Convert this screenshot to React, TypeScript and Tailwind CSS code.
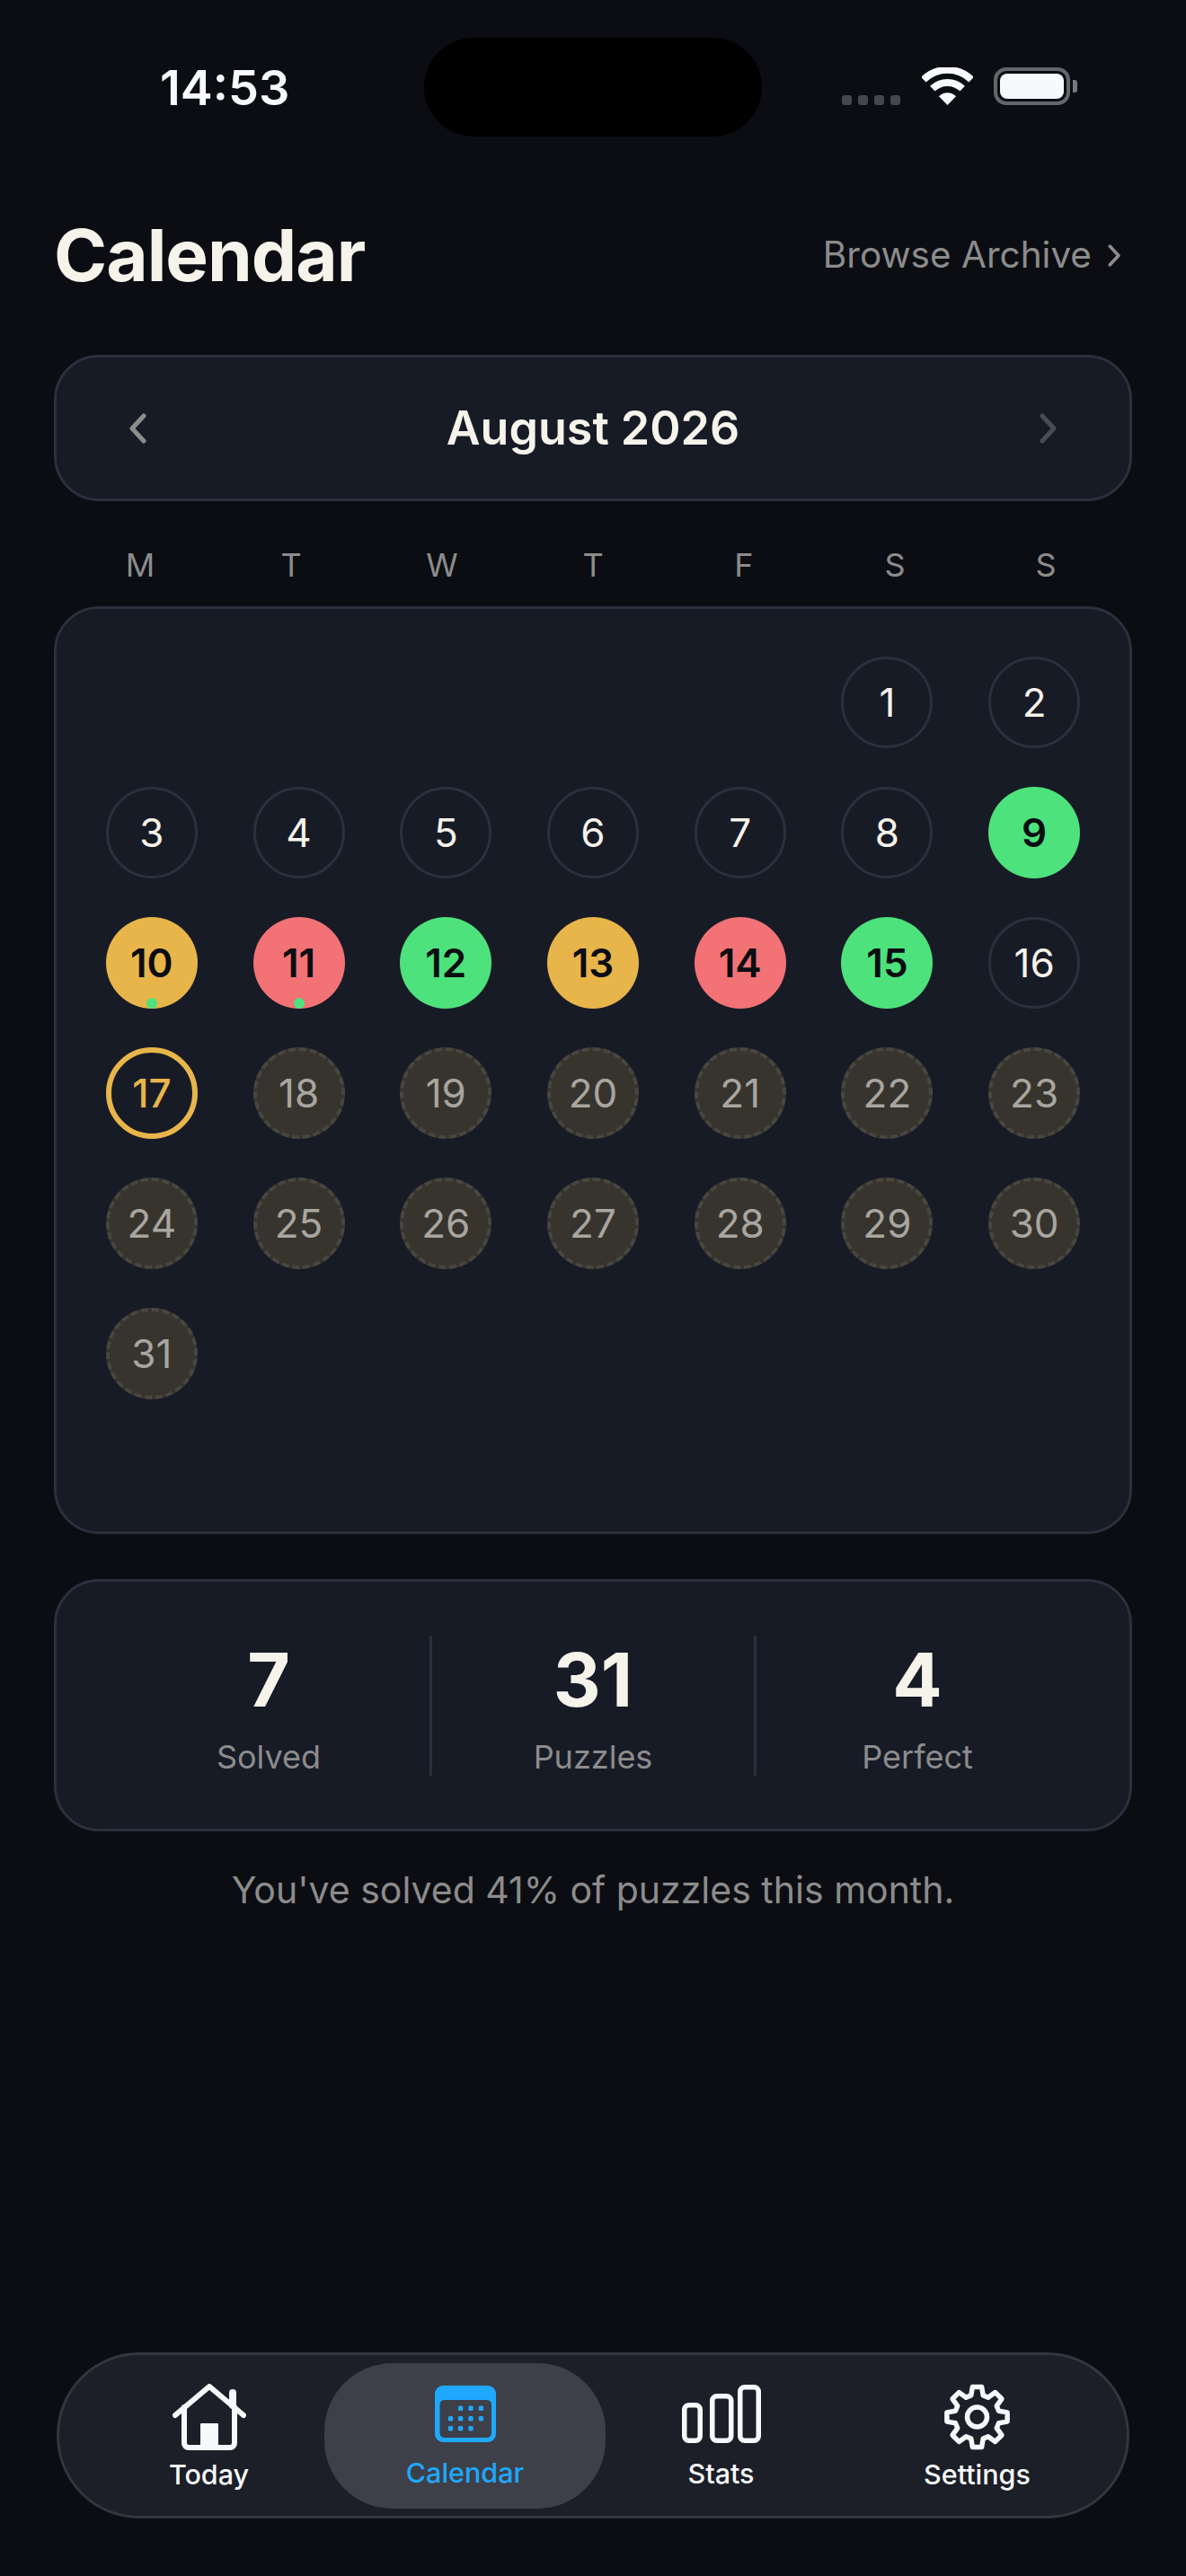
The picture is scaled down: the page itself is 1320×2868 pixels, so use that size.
const blank = [0, 0, 0, 0, 0];

const solved: Record<number, string> = {
  9: "bg-[#4ee27d]",
  10: "bg-[#e8b54a]",
  11: "bg-[#f27276]",
  12: "bg-[#4ee27d]",
  13: "bg-[#e8b54a]",
  14: "bg-[#f27276]",
  15: "bg-[#4ee27d]",
};

function gearPath() {
  // 8 teeth, drawn from polar points
  const cx = 37.5;
  const cy = 37;
  const pts: string[] = [];
  for (let i = 0; i < 8; i++) {
    const a = (i * Math.PI) / 4 - Math.PI / 2;
    const step = [
      [-0.27, 25],
      [-0.15, 34],
      [0.15, 34],
      [0.27, 25],
    ];
    step.forEach(([d, r]) => {
      pts.push(`${(cx + r * Math.cos(a + d)).toFixed(1)} ${(cy + r * Math.sin(a + d)).toFixed(1)}`);
    });
  }
  return "M" + pts.join("L") + "Z";
}

function Chevron({ dir, className }: { dir: "left" | "right"; className: string }) {
  return (
    <svg viewBox="0 0 20 34" className={className} fill="none" stroke="currentColor" strokeWidth="5" strokeLinecap="round" strokeLinejoin="round">
      <path d={dir === "left" ? "M17 3 4 17l13 14" : "M3 3l13 14L3 31"} />
    </svg>
  );
}

function StatusBar() {
  return (
    <div className="flex h-[152px] items-start pt-[42px]">
      <span className="ml-[178px] mt-[26px] w-[146px] text-[54px] font-semibold leading-[60px] text-[#f8f9fd]">14:53</span>
      <div className="ml-[148px] h-[110px] w-[376px] rounded-[55px] bg-black" />
      <div className="ml-[89px] mt-[64px] flex gap-[7px]">
        {[0, 1, 2, 3].map((i) => (
          <span key={i} className="h-[11px] w-[11px] rounded-[3px] bg-[#45474e]" />
        ))}
      </div>
      <svg viewBox="0 0 57 42" className="ml-[24px] mt-[33px] h-[42px] w-[57px]" fill="none" stroke="#f8f9fd" strokeWidth="8">
        <path d="M1.9 13.7a38 38 0 0 1 53.2 0" />
        <path d="M11.8 23.7a24 24 0 0 1 33.4 0" />
        <path d="M19 32.2a13.5 13.5 0 0 1 19 0L28.5 42Z" fill="#f8f9fd" stroke="none" />
      </svg>
      <div className="ml-[23px] mt-[33px] flex items-center">
        <div className="h-[42px] w-[85px] rounded-[14px] border-[4px] border-[#65666b] p-[3px]">
          <div className="h-full w-full rounded-[8px] bg-[#f8f9fd]" />
        </div>
        <div className="ml-[3px] h-[14px] w-[5px] rounded-r-[3px] bg-[#77787c]" />
      </div>
    </div>
  );
}

function DayCell({ day }: { day: number }) {
  const base = "relative mx-auto flex h-[102px] w-[102px] items-center justify-center overflow-hidden rounded-full text-[44px] leading-none";
  if (solved[day]) {
    return (
      <div className={`${base} ${solved[day]} font-semibold text-[#0b0d12]`}>
        {day}
        {(day === 10 || day === 11) && <span className="absolute bottom-0 h-[12px] w-[12px] rounded-full bg-[#4ee27d]" />}
      </div>
    );
  }
  if (day === 17) {
    return <div className={`${base} border-[6px] border-[#e8b54a] font-medium text-[#e8b54a]`}>{day}</div>;
  }
  if (day > 17) {
    return <div className={`${base} border-[4px] border-dashed border-[#48463f] bg-[#37342e] text-[#a8a6a0]`}>{day}</div>;
  }
  return <div className={`${base} border-[3px] border-[#2c303c] text-[#f6f3ea]`}>{day}</div>;
}

function HomeIcon() {
  return (
    <svg viewBox="0 0 82 74" className="h-[74px] w-[82px]" fill="none" stroke="#f8f9fd" strokeWidth="6" strokeLinecap="round" strokeLinejoin="round">
      <path d="M3 35 41 3l38 32" />
      <path d="M67 10v14" strokeWidth="8" />
      <path d="M13 26v40a5 5 0 0 0 5 5h46a5 5 0 0 0 5-5V26" />
      <path d="M32 45h18v26H32Z" fill="#f8f9fd" strokeWidth="2" />
    </svg>
  );
}

function CalendarIcon() {
  const rows = [
    [28.6, 40, 51.4],
    [17.5, 28.6, 40, 51.4],
    [17.5, 28.6, 40],
  ];
  const ys = [25.3, 36.7, 47.7];
  return (
    <svg viewBox="0 0 68 63" className="h-[63px] w-[68px]">
      <rect width="68" height="63" rx="9" fill="#1fa8ff" />
      <rect x="5.5" y="16" width="57.5" height="42" rx="5" fill="#3d4048" />
      {rows.map((row, r) =>
        row.map((x) => <rect key={`${r}-${x}`} x={x - 2.7} y={ys[r] - 2.7} width="5.4" height="5.4" rx="1.6" fill="#1fa8ff" />)
      )}
    </svg>
  );
}

function StatsIcon() {
  return (
    <svg viewBox="0 0 88 65" className="h-[65px] w-[88px]" fill="none" stroke="#f8f9fd" strokeWidth="5.5">
      <rect x="2.75" y="22.75" width="17.5" height="39.5" rx="5" />
      <rect x="33.75" y="12.75" width="21" height="49.5" rx="5" />
      <rect x="64.75" y="2.75" width="20.5" height="59.5" rx="5" />
    </svg>
  );
}

function GearIcon() {
  return (
    <svg viewBox="0 0 75 74" className="h-[74px] w-[75px]" fill="none" stroke="#f8f9fd" strokeWidth="5.5" strokeLinejoin="round">
      <path d={gearPath()} />
      <circle cx="37.5" cy="37" r="11" />
    </svg>
  );
}

export default function App() {
  const days = Array.from({ length: 31 }, (_, i) => i + 1);

  return (
    <div className="flex h-[2868px] w-[1320px] flex-col overflow-hidden bg-[#0b0d12] font-['Inter',sans-serif]">
      <StatusBar />

      <div className="mt-[90px] flex items-center justify-between px-[60px]">
        <h1 className="text-[80px] font-bold leading-[84px] tracking-[-1px] text-[#f6f3ea]">Calendar</h1>
        <div className="mr-[12px] flex items-center gap-[18px] text-[40.5px] leading-[50px] text-[#8c8c8c]">
          Browse Archive
          <Chevron dir="right" className="h-[25px] w-[15px]" />
        </div>
      </div>

      <div className="mx-[60px] mt-[69px] flex h-[163px] items-center justify-between rounded-[50px] border-[3px] border-[#2c303c] bg-[#171b26] px-[80px]">
        <Chevron dir="left" className="h-[34px] w-[20px] text-[#8c8c8c]" />
        <span className="text-[52px] font-semibold leading-[60px] text-[#f6f3ea]">August 2026</span>
        <Chevron dir="right" className="h-[34px] w-[20px] text-[#494c55]" />
      </div>

      <div className="mx-[72px] mt-[50px] grid grid-cols-7 text-center text-[36px] leading-[42px] text-[#8c8c8c]">
        {["M", "T", "W", "T", "F", "S", "S"].map((d, i) => (
          <span key={i}>{d}</span>
        ))}
      </div>

      <div className="mx-[60px] mt-[25px] h-[1033px] rounded-[50px] border-[3px] border-[#2c303c] bg-[#171b26] px-[24px] pt-[53px]">
        <div className="grid grid-cols-7 gap-y-[43px]">
          {blank.map((_, i) => (
            <div key={i} className="h-[102px]" />
          ))}
          {days.map((d) => (
            <DayCell key={d} day={d} />
          ))}
        </div>
      </div>

      <div className="mx-[60px] mt-[50px] flex h-[281px] items-center rounded-[50px] border-[3px] border-[#2c303c] bg-[#171b26] px-[57px]">
        {[
          ["7", "Solved"],
          ["31", "Puzzles"],
          ["4", "Perfect"],
        ].map(([num, label], i) => (
          <div key={label} className={`flex h-[156px] flex-1 flex-col items-center ${i > 0 ? "border-l-[3px] border-[#2c303c]" : ""}`}>
            <span className="mt-[5px] text-[82px] font-bold leading-[90px] text-[#f6f3ea]">{num}</span>
            <span className="mt-[18px] text-[36px] leading-[44px] text-[#8c8c8c]">{label}</span>
          </div>
        ))}
      </div>

      <p className="mt-[40px] text-center text-[41px] leading-[50px] text-[#8c8c8c]">You've solved 41% of puzzles this month.</p>

      <div className="mx-[63px] mb-[64px] mt-auto grid h-[185px] grid-cols-4 items-center rounded-[92px] border-[3px] border-[#33363f] bg-[#1c1f27] px-[24px] text-[30.5px] font-medium leading-[40px] text-[#f8f9fd]">
        <div className="flex flex-col items-center gap-[7px] pt-[6px]">
          <HomeIcon />
          Today
        </div>
        <div className="-mx-[14px] flex h-[162px] flex-col items-center justify-center gap-[14px] rounded-[76px] bg-[#3d4048] pt-[6px] text-[#1fa8ff]">
          <CalendarIcon />
          Calendar
        </div>
        <div className="flex flex-col items-center gap-[14px] pt-[6px]">
          <StatsIcon />
          Stats
        </div>
        <div className="flex flex-col items-center gap-[7px] pt-[6px]">
          <GearIcon />
          Settings
        </div>
      </div>
    </div>
  );
}
